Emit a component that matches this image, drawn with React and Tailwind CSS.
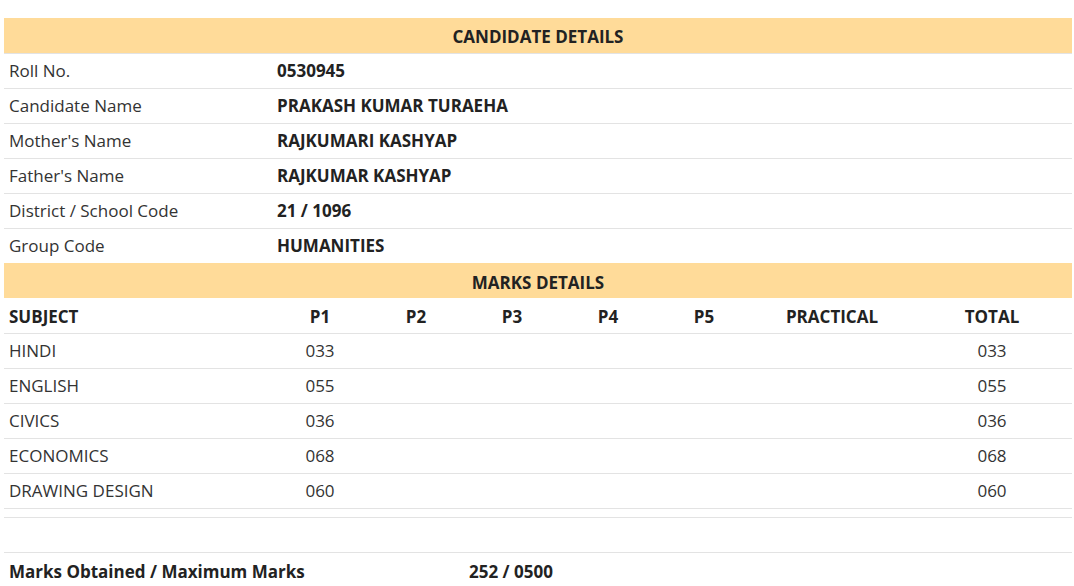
const candidate = [
  ["Roll No.", "0530945"],
  ["Candidate Name", "PRAKASH KUMAR TURAEHA"],
  ["Mother's Name", "RAJKUMARI KASHYAP"],
  ["Father's Name", "RAJKUMAR KASHYAP"],
  ["District / School Code", "21 / 1096"],
  ["Group Code", "HUMANITIES"],
];

const marks = [
  ["HINDI", "033", "033"],
  ["ENGLISH", "055", "055"],
  ["CIVICS", "036", "036"],
  ["ECONOMICS", "068", "068"],
  ["DRAWING DESIGN", "060", "060"],
];

const heads = ["P1", "P2", "P3", "P4", "P5", "PRACTICAL", "TOTAL"];

const App = () => {
  return (
    <div
      className="min-h-screen bg-white pt-[18px] pl-1 text-[17px] text-[#222]"
      style={{ fontFamily: '"Open Sans", "Noto Sans", sans-serif' }}
    >
      <div className="w-[1068px]">
        {/* Candidate details */}
        <table className="w-full table-fixed border-collapse">
          <colgroup>
            <col className="w-[268px]" />
            <col />
          </colgroup>
          <tbody>
            <tr className="h-[35px] bg-[#ffdb99]">
              <th colSpan={2} className="pt-[3px] text-center font-bold leading-none">
                CANDIDATE DETAILS
              </th>
            </tr>
            {candidate.map(([label, value]) => (
              <tr key={label} className="h-[35px] border-t border-[#e3e3e3]">
                <td className="px-[5px] leading-none text-[#333]">{label}</td>
                <td className="px-[5px] font-bold leading-none">{value}</td>
              </tr>
            ))}
          </tbody>
        </table>

        {/* Marks details */}
        <table className="w-full table-fixed border-collapse border-b border-[#e3e3e3]">
          <colgroup>
            <col className="w-[268px]" />
            <col className="w-[96px]" />
            <col className="w-[96px]" />
            <col className="w-[96px]" />
            <col className="w-[96px]" />
            <col className="w-[96px]" />
            <col className="w-[160px]" />
            <col />
          </colgroup>
          <tbody>
            <tr className="h-[35px] bg-[#ffdb99]">
              <th colSpan={8} className="pt-[3px] text-center font-bold leading-none">
                MARKS DETAILS
              </th>
            </tr>
            <tr className="h-[35px] font-bold">
              <td className="px-[5px] pt-[3px] leading-none">SUBJECT</td>
              {heads.map((h) => (
                <td key={h} className="pt-[3px] text-center leading-none">
                  {h}
                </td>
              ))}
            </tr>
            {marks.map(([subject, p1, total]) => (
              <tr key={subject} className="h-[35px] border-t border-[#e3e3e3] text-[#333]">
                <td className="px-[5px] leading-none">{subject}</td>
                <td className="text-center leading-none">{p1}</td>
                <td />
                <td />
                <td />
                <td />
                <td />
                <td className="text-center leading-none">{total}</td>
              </tr>
            ))}
            <tr className="h-[9px] border-t border-[#e3e3e3]">
              <td colSpan={8} />
            </tr>
          </tbody>
        </table>

        {/* Summary */}
        <table className="mt-[34px] w-full table-fixed border-collapse">
          <colgroup>
            <col className="w-[460px]" />
            <col />
          </colgroup>
          <tbody>
            <tr className="h-[35px] border-t border-[#e3e3e3] font-bold">
              <td className="px-[5px] pt-[3px] leading-none">Marks Obtained / Maximum Marks</td>
              <td className="px-[5px] pt-[3px] leading-none">252 / 0500</td>
            </tr>
          </tbody>
        </table>
      </div>
    </div>
  );
};

export default App;
